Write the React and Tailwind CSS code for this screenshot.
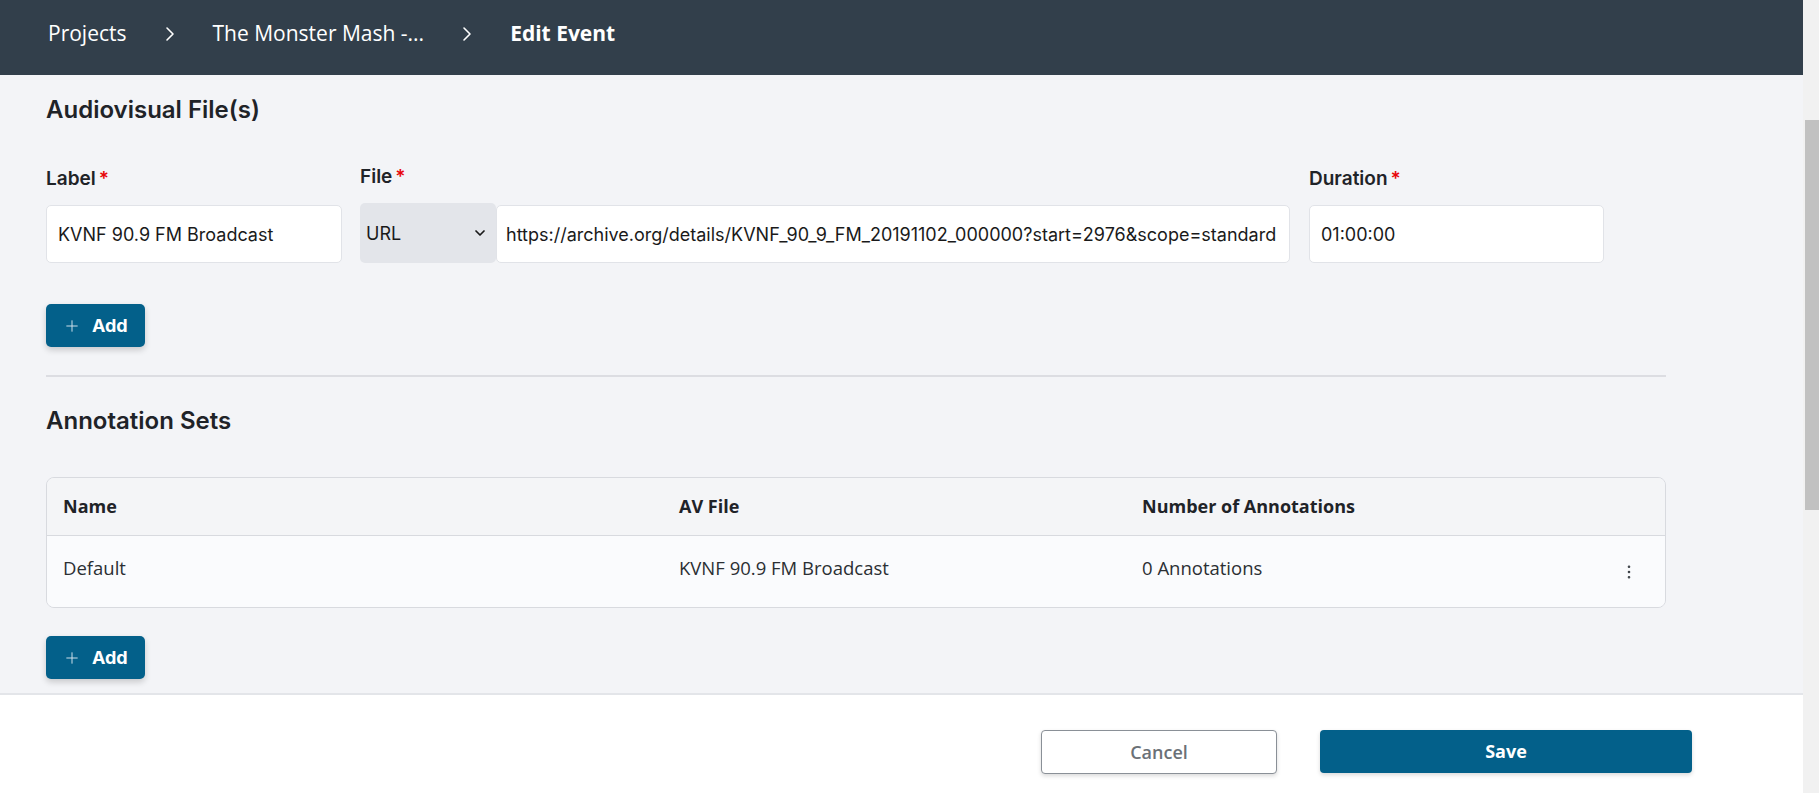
import React from 'react'
import { ChevronDown, Plus, EllipsisVertical } from 'lucide-react'

// Segoe-like face used by the shell (header, table, footer)
const FONT_UI = 'font-["Open_Sans","Noto_Sans",sans-serif]'
const FONT_FORM = 'font-["Inter","Noto_Sans",sans-serif]'

const Crumb = () => (
  <svg width="10" height="16" viewBox="0 0 10 16" fill="none" className="shrink-0">
    <path d="M2 2l6 6-6 6" stroke="#ffffff" strokeWidth="1.6" strokeLinecap="round" strokeLinejoin="round" />
  </svg>
)

const Required = () => <span className="ml-[3px] text-[#e8060b]">*</span>

const FieldLabel = ({ children, className = '' }) => (
  <label className={`block text-[19px] leading-[26px] font-semibold text-[#1f2328] mb-[13px] ${className}`}>
    {children}
    <Required />
  </label>
)

const AddButton = () => (
  <button className={`${FONT_FORM} flex items-center h-[43px] w-[99px] rounded-[5px] bg-[#03608a] pl-[17px] text-white shadow-[0_3px_6px_rgba(0,0,0,0.18)]`}>
    <Plus size={18} strokeWidth={1.3} className="text-[#d3e2eb]" />
    <span className="ml-[11px] text-[18px] font-bold">Add</span>
  </button>
)

const TextBox = ({ children, className = '' }) => (
  <div className={`h-[58px] rounded-[5px] border border-[#e1e3e8] bg-white flex items-center text-[18px] text-[#1a1a1a] whitespace-nowrap overflow-hidden ${className}`}>
    {children}
  </div>
)

const annotationSets = [
  { name: 'Default', file: 'KVNF 90.9 FM Broadcast', count: '0 Annotations' },
]

export default function App() {
  return (
    <div className="flex h-screen overflow-hidden bg-[#f3f4f7]">
      <div className="flex-1 min-w-0 flex flex-col">
        <header className={`${FONT_UI} h-[75px] shrink-0 bg-[#323f4b] flex items-center pl-[48px] pb-[8px] gap-[38px] text-white text-[21px]`}>
          <span>Projects</span>
          <Crumb />
          <span>The Monster Mash -...</span>
          <Crumb />
          <span className="font-bold">Edit Event</span>
        </header>

        <main className={`${FONT_FORM} flex-1 min-h-0 overflow-hidden pl-[46px] text-[#1f2328]`}>
          <section className="w-[1620px] pt-[19px]">
            <h2 className="text-[24px] leading-[32px] font-semibold">Audiovisual File(s)</h2>

            <div className="mt-[40px] flex items-end">
              <div className="w-[296px]">
                <FieldLabel>Label</FieldLabel>
                <TextBox className="pl-[11px]">KVNF 90.9 FM Broadcast</TextBox>
              </div>

              <div className="ml-[18px]">
                <FieldLabel className="-mt-[2px]">File</FieldLabel>
                <div className="flex items-end">
                  <div className="h-[60px] w-[136px] rounded-[5px] bg-[#e3e5ea] flex items-center justify-between pl-[6px] pr-[8px] text-[18px] text-[#1a1a1a]">
                    <span>URL</span>
                    <ChevronDown size={16} strokeWidth={2.6} className="text-[#1a1a1a]" />
                  </div>
                  <TextBox className="w-[794px] pl-[9px]">
                    https://archive.org/details/KVNF_90_9_FM_20191102_000000?start=2976&amp;scope=standard
                  </TextBox>
                </div>
              </div>

              <div className="ml-[19px] w-[295px]">
                <FieldLabel>Duration</FieldLabel>
                <TextBox className="pl-[11px]">01:00:00</TextBox>
              </div>
            </div>

            <div className="mt-[41px]">
              <AddButton />
            </div>

            <div className="mt-[28px] h-[2px] bg-[#dcdde2]" />
          </section>

          <section className="w-[1620px] pt-[28px]">
            <h2 className="text-[24px] leading-[32px] font-semibold">Annotation Sets</h2>

            <div className={`${FONT_UI} mt-[40px] rounded-[8px] border border-[#d8dadf] overflow-hidden`}>
              <div className="grid grid-cols-[616px_463px_1fr] items-center h-[58px] pl-[16px] bg-[#f4f5f7] border-b border-[#d8dadf] text-[18px] font-bold text-[#1f2328]">
                <span>Name</span>
                <span>AV File</span>
                <span>Number of Annotations</span>
              </div>
              {annotationSets.map((row) => (
                <div key={row.name} className="grid grid-cols-[616px_463px_1fr] items-center h-[71px] pl-[16px] bg-[#fafbfd] text-[18.5px] text-[#2b2f33]">
                  <span className="-mt-[8px]">{row.name}</span>
                  <span className="-mt-[8px]">{row.file}</span>
                  <div className="flex items-center justify-between pr-[27px]">
                    <span className="-mt-[8px]">{row.count}</span>
                    <EllipsisVertical size={18} strokeWidth={1.5} className="text-[#3a3f45]" />
                  </div>
                </div>
              ))}
            </div>

            <div className="mt-[28px]">
              <AddButton />
            </div>
          </section>
        </main>

        <footer className={`${FONT_UI} h-[100px] shrink-0 bg-white border-t-2 border-[#e3e5e9]`}>
          <div className="flex pl-[1041px] pt-[35px] gap-[43px]">
            <button className="h-[44px] w-[236px] rounded-[4px] border border-[#8a9097] bg-white text-[18px] font-semibold text-[#6b7177] shadow-[0_2px_4px_rgba(0,0,0,0.15)]">
              Cancel
            </button>
            <button className="h-[43px] w-[372px] rounded-[4px] bg-[#03608a] text-[18px] font-bold text-white shadow-[0_2px_4px_rgba(0,0,0,0.15)]">
              Save
            </button>
          </div>
        </footer>
      </div>

      {/* window scrollbar, page is scrolled part-way */}
      <div className="w-[16px] shrink-0 bg-[#f1f1f1] pt-[120px] pl-[2px]">
        <div className="h-[390px] bg-[#c1c1c1]" />
      </div>
    </div>
  )
}
